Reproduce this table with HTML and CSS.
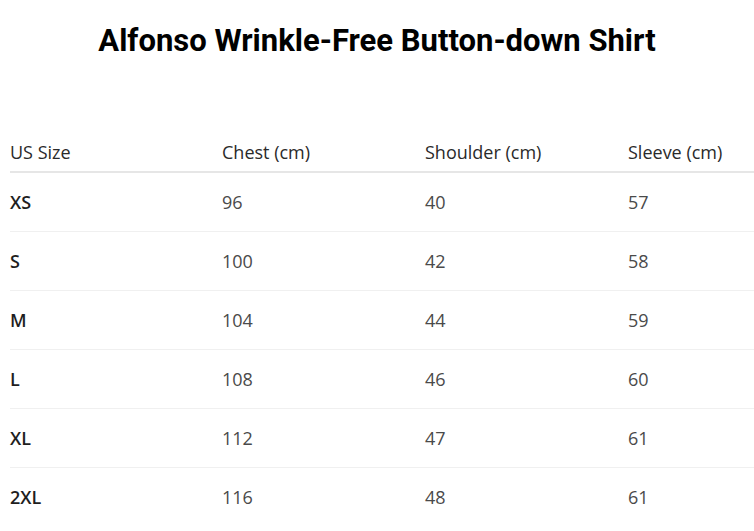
FILE: index.html
```html
<!DOCTYPE html>
<html lang="en">
<head>
<meta charset="utf-8">
<title>Size Chart</title>
<link rel="stylesheet" href="styles.css">
</head>
<body>
<h1 class="title">Alfonso Wrinkle-Free Button-down Shirt</h1>
<div class="chart">
  <div class="row head">
    <div class="cell">US Size</div>
    <div class="cell">Chest (cm)</div>
    <div class="cell">Shoulder (cm)</div>
    <div class="cell">Sleeve (cm)</div>
  </div>
  <div class="row">
    <div class="cell size">XS</div>
    <div class="cell">96</div>
    <div class="cell">40</div>
    <div class="cell">57</div>
  </div>
  <div class="row">
    <div class="cell size">S</div>
    <div class="cell">100</div>
    <div class="cell">42</div>
    <div class="cell">58</div>
  </div>
  <div class="row">
    <div class="cell size">M</div>
    <div class="cell">104</div>
    <div class="cell">44</div>
    <div class="cell">59</div>
  </div>
  <div class="row">
    <div class="cell size">L</div>
    <div class="cell">108</div>
    <div class="cell">46</div>
    <div class="cell">60</div>
  </div>
  <div class="row">
    <div class="cell size">XL</div>
    <div class="cell">112</div>
    <div class="cell">47</div>
    <div class="cell">61</div>
  </div>
  <div class="row last">
    <div class="cell size">2XL</div>
    <div class="cell">116</div>
    <div class="cell">48</div>
    <div class="cell">61</div>
  </div>
</div>
</body>
</html>
```
FILE: styles.css
```css
html, body {
  margin: 0;
  padding: 0;
  background: #ffffff;
  overflow: hidden;
}
body {
  font-family: "Open Sans", "Liberation Sans", sans-serif;
  color: #222;
}
.title {
  font-family: Roboto, "Liberation Sans", sans-serif;
  font-weight: 700;
  font-size: 31px;
  line-height: 36px;
  text-align: center;
  margin: 23px 0 0 0;
  color: #000;
}
.chart {
  margin: 81px 0 0 10px;
  width: 744px;
}
.row {
  display: grid;
  grid-template-columns: 212px 203px 203px 1fr;
  border-bottom: 1px solid #f0f0f0;
  padding: 17px 0;
  font-size: 18px;
  line-height: 24px;
  color: #4a4a4a;
}
.row.head {
  padding: 0 0 7px 0;
  border-bottom: 2px solid #e6e6e6;
  color: #2a2a2a;
}
.row.last {
  border-bottom: none;
}
.cell.size {
  font-weight: 600;
  color: #1e1e1e;
}
```
